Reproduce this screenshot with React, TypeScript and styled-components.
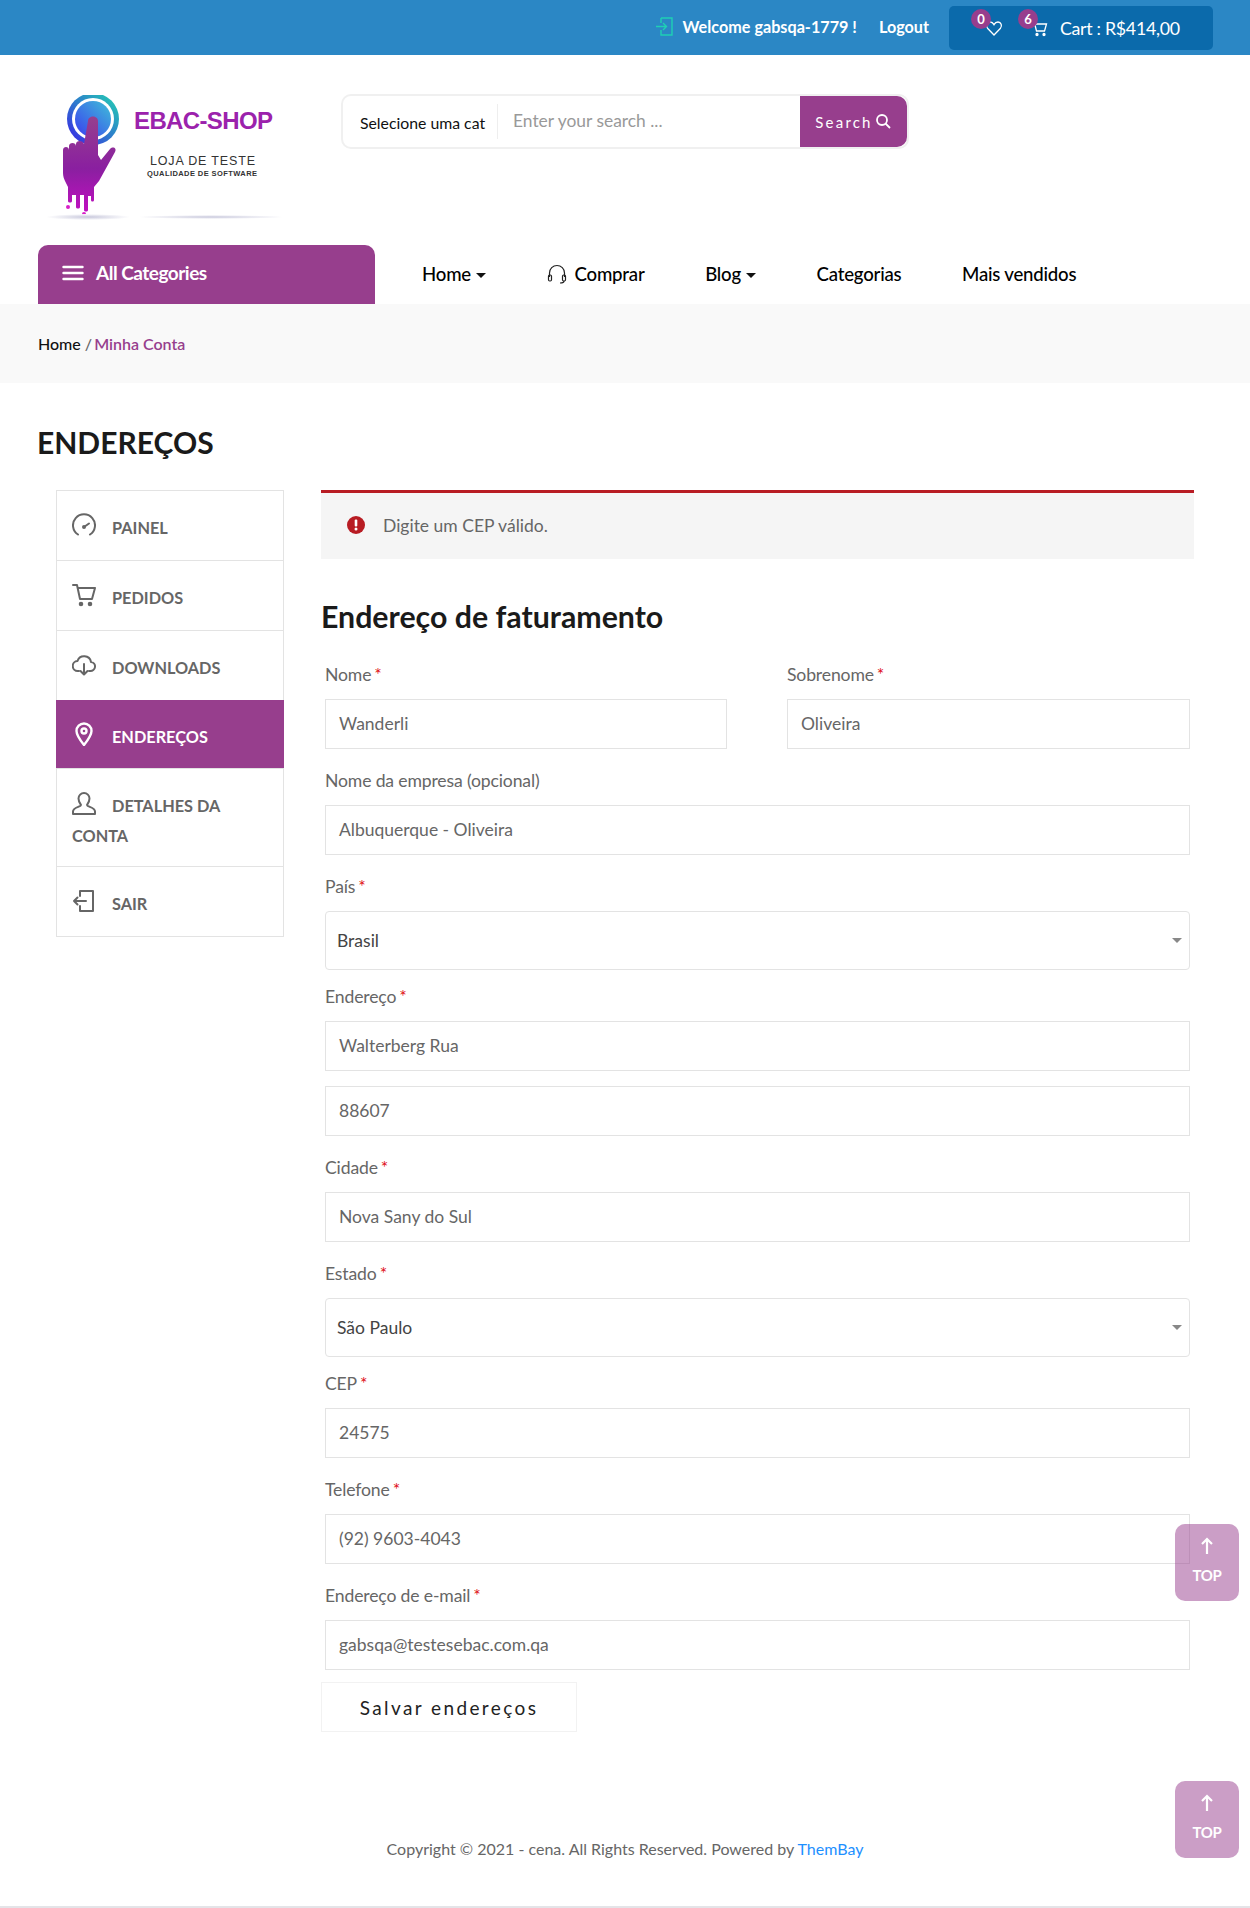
import React from "react";
import styled, { createGlobalStyle } from "styled-components";

const purple = "#973e8d";

const GlobalStyle = createGlobalStyle`
  html, body {
    margin: 0;
    padding: 0;
    background: #fff;
    font-family: Lato, "Open Sans", sans-serif;
    color: #666;
  }
  * {
    box-sizing: border-box;
  }
`;

const Page = styled.div`
  position: relative;
  width: 1250px;
  height: 1908px;
  overflow: hidden;
  border-bottom: 2px solid #e4e4e8;
`;

const TopBar = styled.div`
  height: 55px;
  background: #2b87c5;
  display: flex;
  align-items: center;
  justify-content: flex-end;
  padding-right: 37px;
  color: #fff;
`;

const WelcomeLink = styled.a`
  display: flex;
  align-items: center;
  padding-bottom: 2px;
  font-size: 16.2px;
  font-weight: 700;
  margin-right: 22px;

  svg {
    margin-right: 9px;
  }
`;

const CartBox = styled.div`
  width: 264px;
  height: 44px;
  margin-left: -2px;
  background: #0b6aab;
  border-radius: 5px;
  display: flex;
  align-items: center;
  padding-left: 36px;
`;

const IconHolder = styled.span<{ $gap: number }>`
  position: relative;
  display: inline-flex;
  margin-right: ${(props) => props.$gap}px;
`;

const Badge = styled.span<{ $left: number }>`
  position: absolute;
  left: ${(props) => props.$left}px;
  top: -10px;
  width: 20px;
  height: 20px;
  border-radius: 50%;
  background: ${purple};
  font-size: 13px;
  font-weight: 700;
  line-height: 20px;
  text-align: center;
`;

const CartText = styled.span`
  font-size: 17.8px;
  letter-spacing: -0.3px;
`;

const Header = styled.div`
  height: 190px;
  display: flex;
  align-items: flex-start;
  padding: 39px 0 0 36px;
`;

const Logo = styled.svg`
  display: block;
  margin-top: 1px;
  flex: none;
`;

const SearchBox = styled.div`
  width: 568px;
  height: 55px;
  margin-left: 51px;
  border: 2px solid #f0f0f0;
  border-radius: 10px;
  display: flex;
  align-items: stretch;
`;

const CategorySelect = styled.div`
  width: 155px;
  margin: 8px 0;
  padding: 9px 0 0 17px;
  border-right: 1px solid #eee;
  color: #111;
  font-size: 15.8px;
  white-space: nowrap;
`;

const SearchInput = styled.div`
  flex: 1;
  padding: 14px 0 0 15px;
  font-size: 17.4px;
  color: #999;
`;

const SearchButton = styled.div`
  width: 107px;
  background: ${purple};
  border-radius: 0 10px 10px 0;
  color: #fff;
  font-size: 15px;
  letter-spacing: 2.2px;
  display: flex;
  align-items: center;
  justify-content: center;
  gap: 2px;
`;

const NavBar = styled.div`
  height: 59px;
  display: flex;
  padding-left: 38px;
`;

const CategoriesButton = styled.div`
  width: 337px;
  height: 59px;
  background: ${purple};
  border-radius: 10px 10px 0 0;
  color: #fff;
  display: flex;
  align-items: center;
  padding: 0 0 4px 24px;
  font-size: 19px;
  font-weight: 700;
  letter-spacing: -0.5px;
  gap: 12px;
`;

const Nav = styled.nav`
  display: flex;
  align-items: center;
  margin-left: 47px;
  padding-bottom: 2px;
  gap: 60.6px;
`;

const NavLink = styled.a`
  display: flex;
  align-items: center;
  color: #000;
  font-size: 18.6px;
  font-weight: 500;
  letter-spacing: -0.2px;
`;

const HeadsetIcon = styled.svg`
  margin-right: 8px;
`;

const Caret = styled.span`
  width: 0;
  height: 0;
  margin: 3px 0 0 5px;
  border-left: 5px solid transparent;
  border-right: 5px solid transparent;
  border-top: 5px solid #111;
`;

const Breadcrumb = styled.div`
  height: 79px;
  background: #f9f9f9;
  padding: 30px 0 0 38px;
  font-size: 16px;
  font-weight: 500;
  color: #666;
  line-height: 20px;
`;

const Crumb = styled.span`
  color: #111;
`;

const CurrentCrumb = styled.span`
  margin-left: -2px;
  font-weight: 600;
  color: ${purple};
`;

const PageTitle = styled.h1`
  margin: 39px 0 0 37px;
  height: 68px;
  font-size: 30px;
  line-height: 40px;
  font-weight: 700;
  color: #1a1a1a;
`;

const Account = styled.div`
  display: flex;
  align-items: flex-start;
  padding-left: 56px;
`;

const SideMenu = styled.ul`
  width: 228px;
  margin: 0;
  padding: 0;
  list-style: none;
  border: 1px solid #e3e3e3;
  border-bottom: 0;
  flex: none;
`;

const SideItem = styled.li<{ $active?: boolean; $bottom?: number }>`
  padding: 22px 16px ${(props) => props.$bottom ?? 17}px 15px;
  line-height: 30px;
  font-size: 16.3px;
  font-weight: 700;
  border-bottom: 1px solid #e3e3e3;
  color: ${(props) => (props.$active ? "#fff" : "#666")};
  background: ${(props) => (props.$active ? purple : "transparent")};
  margin: ${(props) => (props.$active ? "-1px -1px 0" : "0")};
  padding-left: ${(props) => (props.$active ? "16px" : "15px")};

  svg {
    display: inline-block;
    vertical-align: -3px;
    margin-right: 16px;
  }
`;

const Content = styled.div`
  width: 873px;
  margin-left: 37px;
`;

const ErrorNotice = styled.div`
  height: 69px;
  background: #f5f5f5;
  border-top: 3px solid #b81c23;
  display: flex;
  align-items: center;
  padding: 0 0 2px 26px;
  font-size: 17.5px;
  gap: 18px;
  color: #666;
`;

const SectionTitle = styled.h3`
  margin: 37px 0 0;
  height: 45px;
  font-size: 30.3px;
  line-height: 40px;
  font-weight: 700;
  color: #1a1a1a;
`;

const FormGrid = styled.div`
  margin-top: 20px;
  padding: 0 4px;
  display: grid;
  grid-template-columns: 402px 403px;
  column-gap: 60px;
`;

const Field = styled.div<{ $wide?: boolean }>`
  grid-column: ${(props) => (props.$wide ? "1 / -1" : "auto")};
  padding-bottom: 18px;
`;

const Label = styled.label`
  display: block;
  font-size: 17.6px;
  line-height: 28px;
  height: 28px;
  margin-bottom: 10px;
  letter-spacing: -0.15px;
`;

const Required = styled.span`
  color: #e01020;
  margin-left: 3px;
`;

const TextBox = styled.div<{ $spaced?: boolean }>`
  height: 50px;
  border: 1px solid #e3e3e3;
  padding: 0 13px;
  margin-top: ${(props) => (props.$spaced ? "15px" : "0")};
  font-size: 17.5px;
  line-height: 47px;
  color: #666;
`;

const SelectBox = styled.div`
  position: relative;
  height: 59px;
  margin-top: 1px;
  margin-bottom: -5px;
  border: 1px solid #e3e3e3;
  border-radius: 4px;
  padding-left: 11px;
  font-size: 17.5px;
  line-height: 57px;
  color: #444;

  &::after {
    content: "";
    position: absolute;
    right: 7px;
    top: 26px;
    border-left: 5px solid transparent;
    border-right: 5px solid transparent;
    border-top: 5px solid #888;
  }
`;

const SaveButton = styled.div`
  width: 256px;
  height: 50px;
  margin-top: -6px;
  border: 1px solid #f2f2f2;
  text-align: center;
  font-size: 19px;
  line-height: 50px;
  letter-spacing: 2.4px;
  color: #222;
`;

const Footer = styled.div`
  position: absolute;
  left: 0;
  right: 0;
  top: 1839px;
  text-align: center;
  font-size: 16px;
  line-height: 20px;
  color: #666;
`;

const FooterLink = styled.a`
  color: #1e90ff;
`;

const TopButton = styled.div<{ $top: number }>`
  position: absolute;
  left: 1175px;
  top: ${(props) => props.$top}px;
  width: 64px;
  height: 77px;
  border-radius: 10px;
  background: rgba(151, 62, 141, 0.5);
  color: #fff;
  display: flex;
  flex-direction: column;
  align-items: center;
  padding-top: 13px;
  font-size: 15px;
  font-weight: 700;
  letter-spacing: -0.3px;
  gap: 11px;
`;

const SideIcon = ({ children }: { children: React.ReactNode }) => (
  <svg
    width="24"
    height="24"
    viewBox="0 0 24 24"
    fill="none"
    stroke="currentColor"
    strokeWidth="2"
    strokeLinecap="round"
    strokeLinejoin="round"
  >
    {children}
  </svg>
);

const LogoMark = () => (
  <Logo width="254" height="130" viewBox="0 0 254 130">
    <defs>
      <linearGradient id="ring" x1="0" y1="1" x2="1" y2="0">
        <stop offset="0" stopColor="#3a1ee8" />
        <stop offset="1" stopColor="#22d8b0" />
      </linearGradient>
      <linearGradient id="disc" x1="0" y1="1" x2="1" y2="0">
        <stop offset="0" stopColor="#3a3cf0" />
        <stop offset="1" stopColor="#3fc0d8" />
      </linearGradient>
      <linearGradient id="hand" x1="0" y1="0" x2="0" y2="1">
        <stop offset="0" stopColor="#96408e" />
        <stop offset="0.55" stopColor="#8a1fa0" />
        <stop offset="1" stopColor="#c010c0" />
      </linearGradient>
      <radialGradient id="shade">
        <stop offset="0" stopColor="#c8c8dc" />
        <stop offset="1" stopColor="#ffffff" />
      </radialGradient>
    </defs>
    <circle cx="57" cy="24" r="26" fill="url(#ring)" />
    <circle cx="57" cy="24" r="21" fill="#fff" />
    <circle cx="57" cy="24" r="18" fill="url(#disc)" />
    <path
      d="M52 26c0-6 10-6 10 0V60l3 5 9-11c3-3 7-1 5 3L63 86l-5 6v13c0 2-3 2-3 0v-4h-3v14c0 2-4 2-4 0V100h-4v12c0 2-4 2-4 0v-12h-4v6c0 2-4 2-4 0V92l-3-6c-1-2-2-5-2-8V55c0-4 6-4 6 0v-4c0-4 7-4 7 0v-2c0-4 7-4 8 0z"
      fill="url(#hand)"
    />
    <circle cx="32" cy="112" r="2" fill="#d820c8" />
    <circle cx="48" cy="119" r="2" fill="#d820c8" />
    <ellipse cx="52" cy="122" rx="42" ry="3" fill="url(#shade)" />
    <ellipse cx="175" cy="122" rx="74" ry="2" fill="url(#shade)" />
    <text x="98" y="34" fontFamily="Liberation Sans" fontSize="24" fontWeight="700" fill="#9b22ac" textLength="139">
      EBAC-SHOP
    </text>
    <text x="114" y="70" fontFamily="Liberation Sans" fontSize="12.5" fill="#333" textLength="105">
      LOJA DE TESTE
    </text>
    <text x="111" y="81" fontFamily="Liberation Sans" fontSize="7.5" fontWeight="700" fill="#333" textLength="110">
      QUALIDADE DE SOFTWARE
    </text>
  </Logo>
);

const ArrowUp = () => (
  <svg width="14" height="18" viewBox="0 0 14 18" fill="none" stroke="#fff" strokeWidth="2.2">
    <path d="M7 17V2M2 7l5-5 5 5" />
  </svg>
);

const App = (): JSX.Element => {
  return (
    <Page>
      <GlobalStyle />
      <TopBar>
        <WelcomeLink>
          <svg width="19" height="19" viewBox="0 0 19 19" fill="none" stroke="#1fd0b4" strokeWidth="1.4">
            <path d="M6 1h11v17H6v-5M6 6V1M1 9.5h10M8 6l3.5 3.5L8 13" />
          </svg>
          Welcome gabsqa-1779 !
        </WelcomeLink>
        <WelcomeLink>Logout</WelcomeLink>
        <CartBox>
          <IconHolder $gap={27}>
            <Badge $left={-14}>0</Badge>
            <svg width="18" height="18" viewBox="0 0 18 18" fill="none" stroke="#fff" strokeWidth="1.3">
              <path d="M9 16 2.5 9.2C.6 7 1.8 3 5 3c2 0 3.2 1.2 4 2.6C9.8 4.2 11 3 13 3c3.2 0 4.4 4 2.5 6.2z" />
            </svg>
          </IconHolder>
          <IconHolder $gap={12}>
            <Badge $left={-12}>6</Badge>
            <svg width="18" height="18" viewBox="0 0 18 18" fill="none" stroke="#fff" strokeWidth="1.3">
              <path d="M1 2h3l2.5 10h8L16.5 5H5" />
              <circle cx="7" cy="15.5" r="1" fill="#fff" />
              <circle cx="14" cy="15.5" r="1" fill="#fff" />
            </svg>
          </IconHolder>
          <CartText>Cart : R$414,00</CartText>
        </CartBox>
      </TopBar>

      <Header>
        <LogoMark />
        <SearchBox>
          <CategorySelect>Selecione uma cat</CategorySelect>
          <SearchInput>Enter your search ...</SearchInput>
          <SearchButton>
            Search
            <svg width="17" height="17" viewBox="0 0 17 17" fill="none" stroke="#fff" strokeWidth="1.8">
              <circle cx="7" cy="7" r="5" />
              <path d="M10.5 10.5 15 15" />
            </svg>
          </SearchButton>
        </SearchBox>
      </Header>

      <NavBar>
        <CategoriesButton>
          <svg width="22" height="16" viewBox="0 0 22 16" stroke="#fff" strokeWidth="2.4" strokeLinecap="round">
            <path d="M1.5 2h19M1.5 8h19M1.5 14h19" />
          </svg>
          All Categories
        </CategoriesButton>
        <Nav>
          <NavLink>
            Home
            <Caret />
          </NavLink>
          <NavLink>
            <HeadsetIcon width="20" height="20" viewBox="0 0 20 20" fill="none" stroke="#222" strokeWidth="1.2">
              <path d="M2.5 13V9a7.5 7.5 0 0 1 15 0v4" />
              <rect x="1.5" y="11" width="3" height="6" rx="1.2" />
              <rect x="15.5" y="11" width="3" height="6" rx="1.2" />
              <path d="M17 17c0 1.5-2 2-4 2" />
            </HeadsetIcon>
            Comprar
          </NavLink>
          <NavLink>
            Blog
            <Caret />
          </NavLink>
          <NavLink>Categorias</NavLink>
          <NavLink>Mais vendidos</NavLink>
        </Nav>
      </NavBar>

      <Breadcrumb>
        <Crumb>Home</Crumb> / <CurrentCrumb>Minha Conta</CurrentCrumb>
      </Breadcrumb>

      <PageTitle>ENDEREÇOS</PageTitle>

      <Account>
        <SideMenu>
          <SideItem>
            <SideIcon>
              <path d="M6 21.5a11 11 0 1 1 12 0" />
              <path d="M12 14l5-3.5" />
              <circle cx="12" cy="14" r="1" />
            </SideIcon>
            PAINEL
          </SideItem>
          <SideItem>
            <SideIcon>
              <path d="M1 2h4l3 14h12l3-11H6" />
              <circle cx="9" cy="21" r="1.3" fill="currentColor" />
              <circle cx="18" cy="21" r="1.3" fill="currentColor" />
            </SideIcon>
            PEDIDOS
          </SideItem>
          <SideItem>
            <SideIcon>
              <path d="M7 18H6a5 5 0 0 1-.5-10A7 7 0 0 1 19 9a4.5 4.5 0 0 1-1 9h-1" />
              <path d="M12 11v10M8.5 18l3.5 3.5 3.5-3.5" />
            </SideIcon>
            DOWNLOADS
          </SideItem>
          <SideItem $active $bottom={16}>
            <SideIcon>
              <path d="M12 23C8 18 4.5 13.5 4.5 9a7.5 7.5 0 0 1 15 0c0 4.5-3.5 9-7.5 14z" strokeWidth="2.4" />
              <circle cx="12" cy="9" r="2.5" strokeWidth="2.4" />
            </SideIcon>
            ENDEREÇOS
          </SideItem>
          <SideItem $bottom={15}>
            <SideIcon>
              <path d="M6.5 7.5a5.5 5.5 0 0 1 11 0c0 3-1.5 5-2.5 6.5 0 2 8 2 8 6.5V23H1v-2.5c0-4.5 8-4.5 8-6.5-1-1.5-2.5-3.5-2.5-6.5z" />
            </SideIcon>
            DETALHES DA CONTA
          </SideItem>
          <SideItem>
            <SideIcon>
              <path d="M8 7V2h13v20H8v-5M2 12h12M2 12l3.5-3.5M2 12l3.5 3.5" />
            </SideIcon>
            SAIR
          </SideItem>
        </SideMenu>

        <Content>
          <ErrorNotice>
            <svg width="18" height="18" viewBox="0 0 18 18">
              <circle cx="9" cy="9" r="9" fill="#b81c23" />
              <rect x="7.7" y="3.5" width="2.6" height="7" rx="1" fill="#fff" />
              <circle cx="9" cy="13" r="1.5" fill="#fff" />
            </svg>
            Digite um CEP válido.
          </ErrorNotice>
          <SectionTitle>Endereço de faturamento</SectionTitle>
          <FormGrid>
            <Field>
              <Label>
                Nome<Required>*</Required>
              </Label>
              <TextBox>Wanderli</TextBox>
            </Field>
            <Field>
              <Label>
                Sobrenome<Required>*</Required>
              </Label>
              <TextBox>Oliveira</TextBox>
            </Field>
            <Field $wide>
              <Label>Nome da empresa (opcional)</Label>
              <TextBox>Albuquerque - Oliveira</TextBox>
            </Field>
            <Field $wide>
              <Label>
                País<Required>*</Required>
              </Label>
              <SelectBox>Brasil</SelectBox>
            </Field>
            <Field $wide>
              <Label>
                Endereço<Required>*</Required>
              </Label>
              <TextBox>Walterberg Rua</TextBox>
              <TextBox $spaced>88607</TextBox>
            </Field>
            <Field $wide>
              <Label>
                Cidade<Required>*</Required>
              </Label>
              <TextBox>Nova Sany do Sul</TextBox>
            </Field>
            <Field $wide>
              <Label>
                Estado<Required>*</Required>
              </Label>
              <SelectBox>São Paulo</SelectBox>
            </Field>
            <Field $wide>
              <Label>
                CEP<Required>*</Required>
              </Label>
              <TextBox>24575</TextBox>
            </Field>
            <Field $wide>
              <Label>
                Telefone<Required>*</Required>
              </Label>
              <TextBox>(92) 9603-4043</TextBox>
            </Field>
            <Field $wide>
              <Label>
                Endereço de e-mail<Required>*</Required>
              </Label>
              <TextBox>gabsqa@testesebac.com.qa</TextBox>
            </Field>
          </FormGrid>
          <SaveButton>Salvar endereços</SaveButton>
        </Content>
      </Account>

      <Footer>
        Copyright © 2021 - cena. All Rights Reserved. Powered by <FooterLink>ThemBay</FooterLink>
      </Footer>

      <TopButton $top={1524}>
        <ArrowUp />
        TOP
      </TopButton>
      <TopButton $top={1781}>
        <ArrowUp />
        TOP
      </TopButton>
    </Page>
  );
};

export default App;
